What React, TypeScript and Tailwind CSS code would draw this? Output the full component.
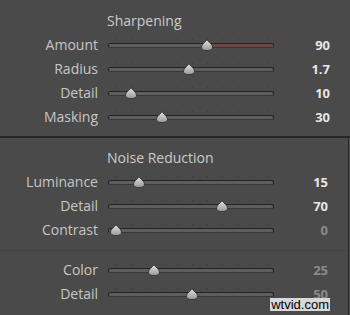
import React from "react";

type Row = { label: string; value: string; frac: number; dim?: boolean; red?: boolean };

const FONT = { fontFamily: '"Open Sans", "Noto Sans", "Liberation Sans", sans-serif' };

function Thumb() {
  return (
    <svg width="12" height="12" viewBox="0 0 12 12" className="block">
      <defs>
        <linearGradient id="tg" x1="0" y1="0" x2="0" y2="1">
          <stop offset="0" stopColor="#e2e2e2" />
          <stop offset="1" stopColor="#9a9a9a" />
        </linearGradient>
      </defs>
      <path
        d="M6 0.5 C7 3 11.5 5 11.5 8 C11.5 10.5 9.5 11.5 6 11.5 C2.5 11.5 0.5 10.5 0.5 8 C0.5 5 5 3 6 0.5 Z"
        fill="url(#tg)"
        stroke="#2e2e2e"
        strokeWidth="0.8"
      />
    </svg>
  );
}

function Slider({ frac, red }: { frac: number; red?: boolean }) {
  const center = 8 + frac * 152;
  const ticks = Array.from({ length: 11 }, (_, i) => 8 + i * 15.2);
  return (
    <div className="relative w-[166px] h-[12px] shrink-0">
      {ticks.map((t, i) => (
        <div
          key={i}
          className="absolute top-[0px] w-[1px] h-[1px] bg-[#3a3a3a]"
          style={{ left: Math.round(t) }}
        />
      ))}
      <div className="absolute left-0 right-0 top-[4px] h-[5px] rounded-full bg-[#5e5e5e] border border-[#242424] border-b-[#383838]" />
      {red && (
        <div
          className="absolute top-[5px] h-[3px] rounded-r-full bg-[#6e4646]"
          style={{ left: center, right: 1 }}
        />
      )}
      <div className="absolute top-[0px]" style={{ left: Math.round(center) - 6 }}>
        <Thumb />
      </div>
    </div>
  );
}

function SliderRow({ r }: { r: Row }) {
  return (
    <div className="flex items-center h-[24px]">
      <div className="w-[98px] text-right text-[14px] text-[#c6c6c6] leading-none">{r.label}</div>
      <div className="ml-[10px]">
        <Slider frac={r.frac} red={r.red} />
      </div>
      <div
        className={`flex-1 text-right pr-[20px] text-[13px] font-bold leading-none ${
          r.dim ? "text-[#8a8a8a]" : "text-[#e6e6e6]"
        }`}
      >
        {r.value}
      </div>
    </div>
  );
}

export default function App() {
  const sharp: Row[] = [
    { label: "Amount", value: "90", frac: 0.6, red: true },
    { label: "Radius", value: "1.7", frac: 0.48 },
    { label: "Detail", value: "10", frac: 0.1 },
    { label: "Masking", value: "30", frac: 0.3 },
  ];
  const noise: Row[] = [
    { label: "Luminance", value: "15", frac: 0.15 },
    { label: "Detail", value: "70", frac: 0.7 },
    { label: "Contrast", value: "0", frac: 0, dim: true },
  ];
  const color: Row[] = [
    { label: "Color", value: "25", frac: 0.25, dim: true },
    { label: "Detail", value: "50", frac: 0.5, dim: true },
  ];
  return (
    <div className="w-[350px] h-[315px] bg-[#4a4a4a] flex flex-col overflow-hidden relative" style={FONT}>
      <div className="pt-[8px] pb-[7px]">
        <div className="h-[25px] flex items-center pl-[107px] text-[14px] text-[#cacaca]">Sharpening</div>
        {sharp.map((r, i) => (
          <SliderRow key={i} r={r} />
        ))}
      </div>
      <div className="h-[2px] bg-[#262626]" />
      <div className="flex-1 border-r border-[#2a2a2a] mr-[1px]">
        <div className="pt-[7px] pb-[8px]">
          <div className="h-[25px] flex items-center pl-[107px] text-[14px] text-[#cacaca]">Noise Reduction</div>
          {noise.map((r, i) => (
            <SliderRow key={i} r={r} />
          ))}
        </div>
        <div className="h-[1px] bg-[#434343]" />
        <div className="pt-[7px]">
          {color.map((r, i) => (
            <SliderRow key={i} r={r} />
          ))}
        </div>
      </div>
      <div
        className="absolute right-[20px] bottom-[4px] px-[1px] bg-[#d8d8d8] text-black text-[13px] leading-[13px]"
        style={{ fontFamily: '"Liberation Sans", Arial, sans-serif' }}
      >
        wtvid.com
      </div>
    </div>
  );
}
